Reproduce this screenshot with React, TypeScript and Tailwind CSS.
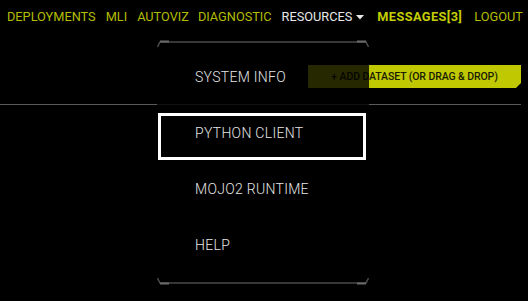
import React from "react";

const menuItems = ["SYSTEM INFO", "PYTHON CLIENT", "MOJO2 RUNTIME", "HELP"];

function MenuFrameEdge({ bottom }: { bottom?: boolean }) {
  return (
    <svg
      width="212"
      height="8"
      viewBox="0 0 212 8"
      className={bottom ? "absolute left-0 bottom-0 rotate-180" : "absolute left-0 top-0"}
    >
      <path d="M0.5 7 L3 2 L209 2 L211.5 7" fill="none" stroke="#4a4a4a" strokeWidth="1.5" />
      <path d="M3 1.6 L12 1.6 M200 1.6 L209 1.6" stroke="#6a6a6a" strokeWidth="2" />
    </svg>
  );
}

export default function App() {
  const active = "PYTHON CLIENT";

  return (
    <div className="relative w-[528px] h-[301px] bg-black overflow-hidden font-['Roboto','Liberation_Sans',sans-serif]">
      {/* top nav */}
      <nav className="flex items-center h-[34px] pl-[7px] text-[12.75px] text-[#b3bd00]">
        <span>DEPLOYMENTS</span>
        <span className="ml-[10px]">MLI</span>
        <span className="ml-[10px]">AUTOVIZ</span>
        <span className="ml-[9px]">DIAGNOSTIC</span>
        <span className="ml-[10px] flex items-center text-[#e8e8e8]">
          RESOURCES
          <svg width="8" height="5" viewBox="0 0 8 5" className="ml-[4px] mt-[1px]">
            <path d="M0 0 L8 0 L4 4.5 Z" fill="#e8e8e8" />
          </svg>
        </span>
        <span className="ml-[13px] font-bold tracking-[0.4px] text-[#c4ce00]">MESSAGES[3]</span>
        <span className="ml-[12px]">LOGOUT</span>
      </nav>

      {/* toolbar */}
      <div className="flex justify-end pr-[7px] mt-[31px]">
        <button className="h-[23px] w-[213px] bg-[#bfc800] text-[10.5px] font-medium tracking-[-0.1px] text-[#1a1c00] flex items-center justify-center [clip-path:polygon(0_0,100%_0,100%_calc(100%-5px),calc(100%-5px)_100%,0_100%)]">
          + ADD DATASET (OR DRAG &amp; DROP)
        </button>
      </div>
      <div className="mt-[16px] mr-[7px] h-px bg-[#5a5a5a]" />

      {/* resources dropdown */}
      <div className="absolute left-[157px] top-[40px] w-[212px] h-[245px] bg-black/80 pt-[17px]">
        <MenuFrameEdge />
        <MenuFrameEdge bottom />
        <div className="flex flex-col gap-[9px]">
          {menuItems.map((item) => (
            <div
              key={item}
              className={
                "ml-[1px] w-[208px] h-[47px] border-[3px] flex items-center pl-[34px] pb-[6px] text-[14px] font-light tracking-[0.3px] text-[#e6e6e6] " +
                (item === active ? "border-white" : "border-transparent")
              }
            >
              {item}
            </div>
          ))}
        </div>
      </div>
    </div>
  );
}
